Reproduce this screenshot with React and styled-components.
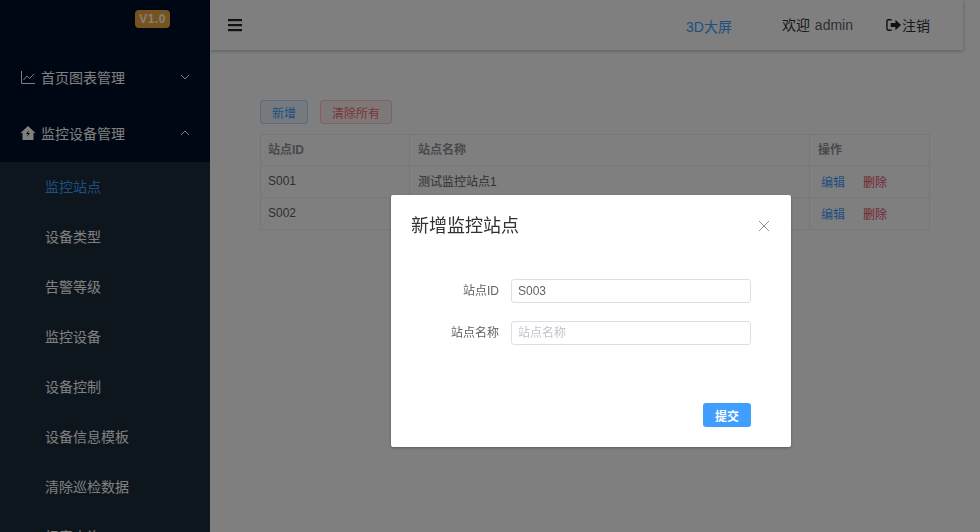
import React from 'react';
import styled, { createGlobalStyle } from 'styled-components';

const Global = createGlobalStyle`
	html, body {
		margin: 0;
		padding: 0;
		height: 100%;
		overflow: hidden;
		background: #fff;
		font-family: 'Liberation Sans', 'Noto Sans CJK SC', sans-serif;
		font-size: 14px;
		color: #606266;
	}
	* {
		box-sizing: border-box;
	}
`;

const Layout = styled.div`
	display: flex;
	width: 980px;
	height: 532px;
	overflow: hidden;
`;

const Sidebar = styled.div`
	width: 210px;
	flex-shrink: 0;
	height: 532px;
	overflow: hidden;
	background: #000e28;
	color: #fff;
`;

const Logo = styled.div`
	height: 50px;
	padding: 10px 40px 0 0;
	display: flex;
	justify-content: flex-end;
	align-items: flex-start;
`;

const Version = styled.span`
	height: 18px;
	width: 35px;
	border-radius: 4px;
	background: #eea53c;
	color: #fff;
	font-size: 12px;
	font-weight: bold;
	letter-spacing: 0.5px;
	line-height: 18px;
	text-align: center;
`;

const MenuItem = styled.div`
	height: 56px;
	display: flex;
	align-items: center;
	padding: 0 20px 3px;
	font-size: 14px;
	color: #fff;
`;

const MenuIcon = styled.svg`
	width: 16px;
	height: 16px;
	margin-right: 5px;
	flex-shrink: 0;
`;

const MenuLabel = styled.span`
	flex: 1;
`;

const Arrow = styled.svg`
	width: 12px;
	height: 12px;
	margin-right: -1px;
`;

const SubMenu = styled.div`
	background: #1a2a3a;
`;

const SubItem = styled.div`
	height: 50px;
	line-height: 50px;
	padding-left: 45px;
	font-size: 14px;
	color: ${(p) => (p.$active ? '#409eff' : '#fff')};
`;

const Main = styled.div`
	flex: 1;
	min-width: 0;
	background: #fff;
`;

const Header = styled.div`
	width: 753px;
	height: 50px;
	display: flex;
	align-items: center;
	padding: 0 33px 0 18px;
	background: #fff;
	box-shadow: 0 1px 4px rgba(0, 21, 41, 0.3);
`;

const Hamburger = styled.svg`
	width: 14px;
	height: 14px;
	margin-right: auto;
`;

const HeaderLink = styled.a`
	color: #409eff;
	font-size: 14px;
	padding-top: 2px;
`;

const Welcome = styled.span`
	margin-left: 50px;
	font-size: 14px;
	color: #303133;
	padding-bottom: 2px;
	word-spacing: 1px;
`;

const UserName = styled.span`
	color: #606266;
`;

const Logout = styled.span`
	margin-left: 33px;
	display: flex;
	align-items: center;
	font-size: 14px;
	color: #303133;
`;

const LogoutIcon = styled.svg`
	width: 16px;
	height: 14px;
`;

const Content = styled.div`
	padding: 50px 50px 0;
`;

const Actions = styled.div`
	display: flex;
	gap: 12px;
	margin-bottom: 10px;
`;

const PlainButton = styled.button`
	height: 24px;
	padding: 0 11px;
	font-family: inherit;
	font-size: 12px;
	border-radius: 3px;
	border: 1px solid ${(p) => (p.$danger ? '#fbc4c4' : '#b3d8ff')};
	background: ${(p) => (p.$danger ? '#fef0f0' : '#ecf5ff')};
	color: ${(p) => (p.$danger ? '#f56c6c' : '#409eff')};
`;

const Table = styled.table`
	width: 670px;
	border-collapse: separate;
	border-spacing: 0;
	table-layout: fixed;
	font-size: 12px;
	border-left: 1px solid #ebeef5;
	border-top: 1px solid #ebeef5;
`;

const Th = styled.th`
	height: 31px;
	padding: 0 0 3px 8px;
	text-align: left;
	font-weight: bold;
	color: #909399;
	border-right: 1px solid #ebeef5;
	border-bottom: 1px solid #ebeef5;
	width: ${(p) => p.$width}px;
	&:first-child {
		padding-left: 7px;
	}
`;

const Td = styled.td`
	height: 32px;
	padding: 0 0 ${(p) => (p.$action ? 0 : 2)}px 8px;
	color: #606266;
	border-right: 1px solid #ebeef5;
	border-bottom: 1px solid #ebeef5;
	&:first-child {
		padding-left: 7px;
	}
`;

const TextButton = styled.a`
	font-size: 12px;
	margin-left: 3px;
	margin-right: 15px;
	color: ${(p) => (p.$danger ? '#ed4a68' : '#409eff')};
`;

const Overlay = styled.div`
	position: fixed;
	inset: 0;
	background: rgba(0, 0, 0, 0.5);
`;

const Dialog = styled.div`
	position: fixed;
	left: 391px;
	top: 195px;
	width: 400px;
	height: 252px;
	background: #fff;
	border-radius: 2px;
	box-shadow: 0 1px 3px rgba(0, 0, 0, 0.3);
	display: flex;
	flex-direction: column;
`;

const DialogHeader = styled.div`
	display: flex;
	justify-content: space-between;
	align-items: flex-start;
	padding: 19px 20px 0;
	height: 62px;
`;

const DialogTitle = styled.span`
	font-size: 18px;
	line-height: 24px;
	color: #303133;
`;

const CloseIcon = styled.svg`
	width: 14px;
	height: 14px;
	margin-top: 5px;
`;

const DialogBody = styled.div`
	padding: 22px 40px 0 0;
	flex: 1;
	display: flex;
	flex-direction: column;
	gap: 18px;
`;

const FormRow = styled.div`
	display: flex;
	align-items: center;
`;

const FormLabel = styled.label`
	width: 120px;
	padding: 0 12px 3px 0;
	font-size: 12px;
	text-align: right;
	color: #606266;
`;

const Input = styled.input`
	flex: 1;
	min-width: 0;
	height: 24px;
	padding: 0 6px;
	font-family: inherit;
	font-size: 12px;
	color: #606266;
	border: 1px solid #dcdfe6;
	border-radius: 3px;
	outline: none;
	&::placeholder {
		color: #c0c4cc;
	}
`;

const DialogFooter = styled.div`
	display: flex;
	justify-content: flex-end;
	padding: 0 40px 20px;
`;

const SubmitButton = styled.button`
	width: 48px;
	height: 24px;
	border: none;
	border-radius: 3px;
	background: #409eff;
	color: #fff;
	font-family: inherit;
	font-size: 12px;
	font-weight: bold;
`;

const subItems = ['监控站点', '设备类型', '告警等级', '监控设备', '设备控制', '设备信息模板', '清除巡检数据', '报表查询'];

const rows = [
	{ id: 'S001', name: '测试监控站点1' },
	{ id: 'S002', name: '测试监控站点2' }
];

export default function App() {
	return (
		<Layout>
			<Global />
			<Sidebar>
				<Logo>
					<Version>V1.0</Version>
				</Logo>
				<MenuItem>
					<MenuIcon viewBox="0 0 16 16" fill="none" stroke="#fff" strokeWidth="1">
						<path d="M1.5 2v12.5H15M3.5 11l3.5-4 2.5 2.5L14 5" />
					</MenuIcon>
					<MenuLabel>首页图表管理</MenuLabel>
					<Arrow viewBox="0 0 12 12" fill="none" stroke="#fff" strokeWidth="1">
						<path d="M2 4l4 4 4-4" />
					</Arrow>
				</MenuItem>
				<MenuItem>
					<MenuIcon viewBox="0 0 16 16">
						<path d="M8 1L.5 8H2.5v7h11V8h2z" fill="#fff" />
						<path d="M9 5L6 9h2l-1 3 3-4H8z" fill="#000e28" />
					</MenuIcon>
					<MenuLabel>监控设备管理</MenuLabel>
					<Arrow viewBox="0 0 12 12" fill="none" stroke="#fff" strokeWidth="1">
						<path d="M2 8l4-4 4 4" />
					</Arrow>
				</MenuItem>
				<SubMenu>
					{subItems.map((item, i) => (
						<SubItem key={item} $active={i === 0}>
							{item}
						</SubItem>
					))}
				</SubMenu>
			</Sidebar>
			<Main>
				<Header>
					<Hamburger viewBox="0 0 14 14" fill="#222">
						<rect x="0" y="1" width="14" height="2.2" />
						<rect x="0" y="6" width="14" height="2.2" />
						<rect x="0" y="11" width="14" height="2.2" />
					</Hamburger>
					<HeaderLink>3D大屏</HeaderLink>
					<Welcome>
						欢迎 <UserName>admin</UserName>
					</Welcome>
					<Logout>
						<LogoutIcon viewBox="0 0 17 14">
							<path d="M6 1.5H2.5a1.5 1.5 0 0 0-1.5 1.5v8a1.5 1.5 0 0 0 1.5 1.5H6" fill="none" stroke="#222" strokeWidth="1.5" />
							<path d="M5 5h5V1.5L16 7l-6 5.5V9H5z" fill="#222" />
						</LogoutIcon>
						注销
					</Logout>
				</Header>
				<Content>
					<Actions>
						<PlainButton>新增</PlainButton>
						<PlainButton $danger>清除所有</PlainButton>
					</Actions>
					<Table>
						<thead>
							<tr>
								<Th $width={149}>站点ID</Th>
								<Th $width={400}>站点名称</Th>
								<Th $width={120}>操作</Th>
							</tr>
						</thead>
						<tbody>
							{rows.map((row) => (
								<tr key={row.id}>
									<Td>{row.id}</Td>
									<Td>{row.name}</Td>
									<Td $action>
										<TextButton>编辑</TextButton>
										<TextButton $danger>删除</TextButton>
									</Td>
								</tr>
							))}
						</tbody>
					</Table>
				</Content>
			</Main>
			<Overlay />
			<Dialog>
				<DialogHeader>
					<DialogTitle>新增监控站点</DialogTitle>
					<CloseIcon viewBox="0 0 14 14" fill="none" stroke="#909399" strokeWidth="1">
						<path d="M2 2l10 10M12 2L2 12" />
					</CloseIcon>
				</DialogHeader>
				<DialogBody>
					<FormRow>
						<FormLabel>站点ID</FormLabel>
						<Input defaultValue="S003" />
					</FormRow>
					<FormRow>
						<FormLabel>站点名称</FormLabel>
						<Input placeholder="站点名称" />
					</FormRow>
				</DialogBody>
				<DialogFooter>
					<SubmitButton>提交</SubmitButton>
				</DialogFooter>
			</Dialog>
		</Layout>
	);
}
